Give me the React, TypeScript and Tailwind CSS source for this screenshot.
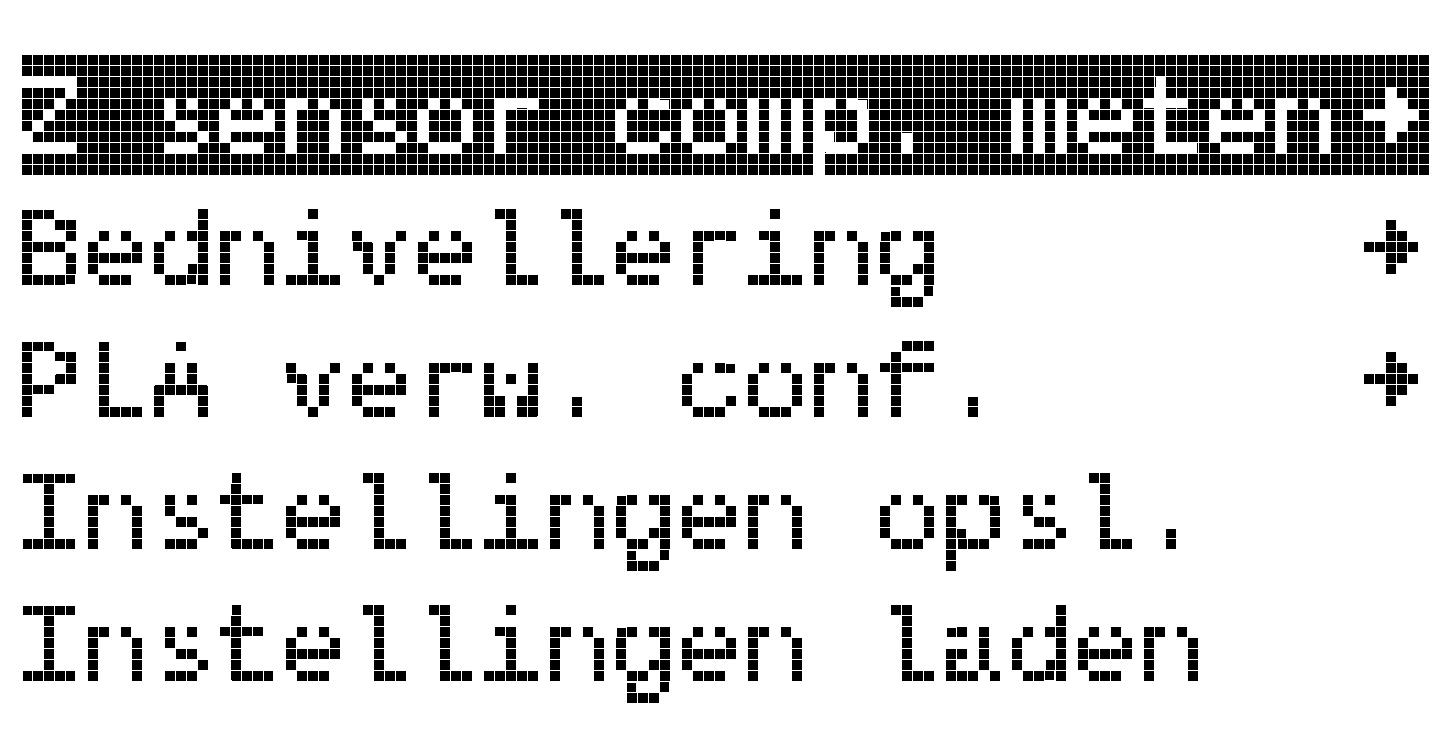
import React from "react";

const ARROW = ["..X..", "..XX.", "XXXXX", "..XX.", "..X.."];
const BACK = ["XXXXX", "....X", "...X.", "..X..", ".X...", "X....", "XXXXX"];

function PixelIcon({ rows, color, className }: { rows: string[]; color: string; className?: string }) {
  const w = rows[0].length * 11;
  const h = rows.length * 11;
  return (
    <svg width={w} height={h} viewBox={`0 0 ${w} ${h}`} className={className} shapeRendering="crispEdges">
      {rows.flatMap((r, y) =>
        r.split("").map((c, x) =>
          c === "X" ? <rect key={`${x}-${y}`} x={x * 11} y={y * 11} width={11} height={11} fill={color} /> : null
        )
      )}
    </svg>
  );
}

const items = [
  { t: "Bednivellering", arrow: true },
  { t: "PLA verw. conf.", arrow: true },
  { t: "Instellingen opsl.", arrow: false },
  { t: "Instellingen laden", arrow: false },
];

export default function App() {
  return (
    <div className="w-[1452px] h-[748px] overflow-hidden bg-white pl-[22px] pt-[55px]">
      <svg width="0" height="0" className="absolute">
        <filter id="lcd" x="0" y="0" width="100%" height="100%" colorInterpolationFilters="sRGB">
          <feFlood x="4" y="4" width="2" height="2" floodColor="#000" result="dot" />
          <feOffset in="dot" dx="0" dy="0" x="0" y="0" width="11" height="11" result="cell" />
          <feTile in="cell" result="grid" />
          <feComposite in="SourceGraphic" in2="grid" operator="in" result="sampled" />
          <feComponentTransfer in="sampled" result="th">
            <feFuncR type="discrete" tableValues="0 1 1 1 1 1 1 1" />
            <feFuncG type="discrete" tableValues="0 1 1 1 1 1 1 1" />
            <feFuncB type="discrete" tableValues="0 1 1 1 1 1 1 1" />
            <feFuncA type="discrete" tableValues="0 1 1 1 1 1 1 1" />
          </feComponentTransfer>
          <feMorphology in="th" operator="dilate" radius="4" />
        </filter>
      </svg>
      <div className="w-[1408px] [filter:url(#lcd)] font-['Liberation_Mono',monospace] text-[108px] leading-[122px] tracking-[1.19px] text-black">
        <div className="flex h-[121px] bg-black text-white">
          <PixelIcon rows={BACK} color="#fff" className="block shrink-0 mt-[22px]" />
          <span className="ml-[71.6px] pt-[8.25px] whitespace-pre">sensor comp. meten</span>
          <PixelIcon rows={ARROW} color="#fff" className="block shrink-0 ml-auto mr-[11px] mt-[33px]" />
        </div>
        {items.map((it) => (
          <div key={it.t} className="flex h-[132px]">
            <span className="ml-[-5.4px] pt-[19.25px] whitespace-pre">{it.t}</span>
            {it.arrow && (
              <PixelIcon rows={ARROW} color="#000" className="block shrink-0 ml-auto mr-[11px] mt-[44px]" />
            )}
          </div>
        ))}
      </div>
    </div>
  );
}
